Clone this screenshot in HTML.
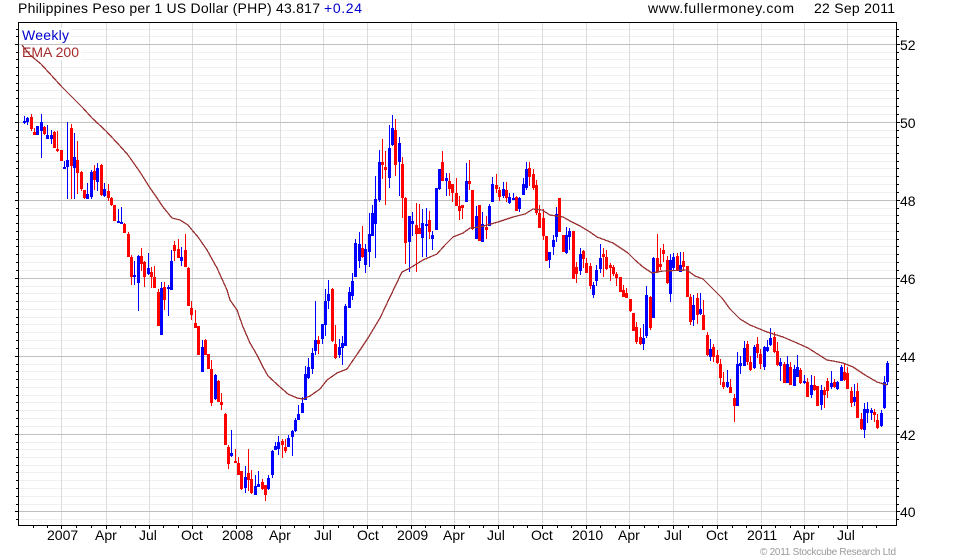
<!DOCTYPE html>
<html><head><meta charset="utf-8"><title>Philippines Peso per 1 US Dollar</title>
<style>html,body{margin:0;padding:0;background:#fff;width:980px;height:560px;overflow:hidden}svg{display:block}text{font-family:"Liberation Sans",Arial,sans-serif;font-size:14px;fill:#000}</style></head>
<body>
<svg xmlns="http://www.w3.org/2000/svg" width="980" height="560" viewBox="0 0 980 560">
<g shape-rendering="crispEdges" fill="none">
<path stroke="#f0f0f0" d="M19 29.5H896M19 36.5H896M19 52.5H896M19 59.5H896M19 67.5H896M19 75.5H896M19 83.5H896M19 90.5H896M19 98.5H896M19 106.5H896M19 114.5H896M19 130.5H896M19 137.5H896M19 145.5H896M19 153.5H896M19 161.5H896M19 168.5H896M19 176.5H896M19 184.5H896M19 192.5H896M19 208.5H896M19 215.5H896M19 223.5H896M19 231.5H896M19 239.5H896M19 246.5H896M19 254.5H896M19 262.5H896M19 270.5H896M19 286.5H896M19 293.5H896M19 301.5H896M19 309.5H896M19 317.5H896M19 324.5H896M19 332.5H896M19 340.5H896M19 348.5H896M19 364.5H896M19 371.5H896M19 379.5H896M19 387.5H896M19 395.5H896M19 402.5H896M19 410.5H896M19 418.5H896M19 426.5H896M19 442.5H896M19 449.5H896M19 457.5H896M19 465.5H896M19 472.5H896M19 480.5H896M19 488.5H896M19 496.5H896M19 504.5H896M19 519.5H896"/>
<path stroke="#dcdcdc" d="M61.5 23V525M106.5 23V525M149.5 23V525M192.5 23V525M236.5 23V525M280.5 23V525M323.5 23V525M367.5 23V525M411.5 23V525M454.5 23V525M498.5 23V525M542.5 23V525M586.5 23V525M629.5 23V525M673.5 23V525M717.5 23V525M761.5 23V525M804.5 23V525M847.5 23V525"/>
<path stroke="#c0c0c0" d="M19 44.5H896M19 122.5H896M19 200.5H896M19 278.5H896M19 356.5H896M19 434.5H896M19 511.5H896"/>
<path stroke="#000" d="M18.5 22V526M18 22.5H897M896.5 22V526M18 525.5H897"/>
<path stroke="#000" d="M16 29.5H18M16 36.5H18M15 44.5H18M16 52.5H18M16 59.5H18M16 67.5H18M16 75.5H18M16 83.5H18M16 90.5H18M16 98.5H18M16 106.5H18M16 114.5H18M15 122.5H18M16 130.5H18M16 137.5H18M16 145.5H18M16 153.5H18M16 161.5H18M16 168.5H18M16 176.5H18M16 184.5H18M16 192.5H18M15 200.5H18M16 208.5H18M16 215.5H18M16 223.5H18M16 231.5H18M16 239.5H18M16 246.5H18M16 254.5H18M16 262.5H18M16 270.5H18M15 278.5H18M16 286.5H18M16 293.5H18M16 301.5H18M16 309.5H18M16 317.5H18M16 324.5H18M16 332.5H18M16 340.5H18M16 348.5H18M15 356.5H18M16 364.5H18M16 371.5H18M16 379.5H18M16 387.5H18M16 395.5H18M16 402.5H18M16 410.5H18M16 418.5H18M16 426.5H18M15 434.5H18M16 442.5H18M16 449.5H18M16 457.5H18M16 465.5H18M16 472.5H18M16 480.5H18M16 488.5H18M16 496.5H18M16 504.5H18M15 511.5H18M16 519.5H18"/>
<path stroke="#000" d="M897 29.5H899M897 36.5H899M897 44.5H900M897 52.5H899M897 59.5H899M897 67.5H899M897 75.5H899M897 83.5H899M897 90.5H899M897 98.5H899M897 106.5H899M897 114.5H899M897 122.5H900M897 130.5H899M897 137.5H899M897 145.5H899M897 153.5H899M897 161.5H899M897 168.5H899M897 176.5H899M897 184.5H899M897 192.5H899M897 200.5H900M897 208.5H899M897 215.5H899M897 223.5H899M897 231.5H899M897 239.5H899M897 246.5H899M897 254.5H899M897 262.5H899M897 270.5H899M897 278.5H900M897 286.5H899M897 293.5H899M897 301.5H899M897 309.5H899M897 317.5H899M897 324.5H899M897 332.5H899M897 340.5H899M897 348.5H899M897 356.5H900M897 364.5H899M897 371.5H899M897 379.5H899M897 387.5H899M897 395.5H899M897 402.5H899M897 410.5H899M897 418.5H899M897 426.5H899M897 434.5H900M897 442.5H899M897 449.5H899M897 457.5H899M897 465.5H899M897 472.5H899M897 480.5H899M897 488.5H899M897 496.5H899M897 504.5H899M897 511.5H900M897 519.5H899"/>
<path stroke="#000" d="M33.5 526V528M47.5 526V528M61.5 526V529M76.5 526V528M91.5 526V528M106.5 526V529M120.5 526V528M135.5 526V528M149.5 526V529M163.5 526V528M178.5 526V528M192.5 526V529M207.5 526V528M222.5 526V528M236.5 526V529M251.5 526V528M265.5 526V528M280.5 526V529M294.5 526V528M309.5 526V528M323.5 526V529M338.5 526V528M353.5 526V528M367.5 526V529M382.5 526V528M396.5 526V528M411.5 526V529M425.5 526V528M440.5 526V528M454.5 526V529M469.5 526V528M483.5 526V528M498.5 526V529M513.5 526V528M527.5 526V528M542.5 526V529M557.5 526V528M571.5 526V528M586.5 526V529M600.5 526V528M615.5 526V528M629.5 526V529M644.5 526V528M658.5 526V528M673.5 526V529M688.5 526V528M702.5 526V528M717.5 526V529M732.5 526V528M746.5 526V528M761.5 526V529M775.5 526V528M790.5 526V528M804.5 526V529M818.5 526V528M833.5 526V528M847.5 526V529M862.5 526V528M876.5 526V528"/>
</g>
<rect x="20" y="28" width="50" height="15" fill="#fff"/>
<rect x="20" y="45" width="61" height="15" fill="#fff"/>
<text x="18" y="13" textLength="302">Philippines Peso per 1 US Dollar (PHP) 43.817</text>
<text x="324" y="13" textLength="38" style="fill:#0000cc">+0.24</text>
<text x="648" y="13" textLength="146">www.fullermoney.com</text>
<text x="814" y="13" textLength="81">22 Sep 2011</text>
<text x="22" y="40" textLength="47" style="fill:#0000cc">Weekly</text>
<text x="22" y="57" textLength="57" style="fill:#a52a2a">EMA 200</text>
<text x="900" y="50">52</text><text x="900" y="128">50</text><text x="900" y="206">48</text><text x="900" y="284">46</text><text x="900" y="362">44</text><text x="900" y="440">42</text><text x="900" y="517">40</text>
<text x="47" y="540">2007</text><text x="95" y="540">Apr</text><text x="139" y="540">Jul</text><text x="181" y="540">Oct</text><text x="222" y="540">2008</text><text x="269" y="540">Apr</text><text x="314" y="540">Jul</text><text x="357" y="540">Oct</text><text x="397" y="540">2009</text><text x="443" y="540">Apr</text><text x="487" y="540">Jul</text><text x="531" y="540">Oct</text><text x="572" y="540">2010</text><text x="618" y="540">Apr</text><text x="664" y="540">Jul</text><text x="706" y="540">Oct</text><text x="747" y="540">2011</text><text x="793" y="540">Apr</text><text x="837" y="540">Jul</text>
<text x="760" y="555" textLength="136" style="font-size:10px;fill:#999">© 2011 Stockcube Research Ltd</text>
<g shape-rendering="crispEdges" fill="none">
<path stroke="#f00" stroke-width="1" d="M31.5 114V131M34.5 128V135M44.5 126V135M54.5 131V148M57.5 131V152M61.5 150V161M71.5 124V199M77.5 141V194M81.5 171V191M84.5 190V199M94.5 165V190M101.5 164V196M108.5 184V201M111.5 197V206M114.5 205V221M124.5 223V233M128.5 232V257M131.5 255V285M141.5 248V271M144.5 261V287M151.5 267V288M154.5 266V288M158.5 289V326M164.5 282V310M174.5 241V261M178.5 239V258M185.5 234V267M188.5 267V306M191.5 301V320M195.5 310V328M198.5 326V355M205.5 339V355M208.5 354V369M211.5 360V406M218.5 380V402M221.5 393V410M225.5 413V445M228.5 445V469M235.5 449V463M238.5 457V475M241.5 471V490M248.5 449V491M251.5 470V494M262.5 479V490M265.5 485V501M282.5 439V458M285.5 439V453M318.5 336V354M332.5 288V342M335.5 325V359M362.5 226V258M382.5 139V179M385.5 151V205M395.5 119V176M402.5 157V218M405.5 197V264M416.5 203V272M419.5 204V234M429.5 211V239M442.5 151V181M449.5 173V196M452.5 184V202M456.5 178V206M459.5 196V220M462.5 205V219M469.5 160V190M472.5 190V230M479.5 205V241M486.5 216V239M496.5 174V193M499.5 187V201M506.5 182V202M516.5 196V211M529.5 162V186M533.5 169V190M536.5 180V215M539.5 205V228M543.5 209V240M546.5 236V261M559.5 198V232M563.5 235V252M573.5 231V279M576.5 262V283M583.5 250V268M586.5 258V273M590.5 263V289M603.5 248V277M606.5 250V270M610.5 263V281M613.5 265V276M616.5 272V286M620.5 277V292M623.5 285V297M626.5 288V298M630.5 299V312M633.5 313V331M636.5 322V344M640.5 328V345M650.5 296V330M657.5 234V273M660.5 248V270M663.5 244V262M667.5 256V284M677.5 253V271M683.5 252V270M687.5 266V297M690.5 294V325M697.5 293V324M703.5 300V330M707.5 332V356M713.5 344V362M717.5 350V364M720.5 359V385M723.5 372V389M730.5 379V393M734.5 394V422M747.5 341V365M750.5 356V371M757.5 337V358M760.5 349V369M774.5 332V353M777.5 342V366M784.5 362V383M790.5 362V385M800.5 368V384M807.5 378V397M814.5 376V391M817.5 386V406M824.5 387V408M827.5 378V398M834.5 379V388M844.5 363V381M847.5 367V389M851.5 387V407M857.5 383V418M861.5 413V430M874.5 409V422M877.5 414V429"/>
<path stroke="#f00" stroke-width="3" d="M31.5 117V129M34.5 132V135M44.5 127V134M54.5 132V148M57.5 149V151M61.5 150V161M71.5 128V166M77.5 160V173M81.5 172V189M84.5 190V198M94.5 171V180M101.5 165V195M108.5 191V198M111.5 198V205M114.5 205V221M124.5 224V233M128.5 234V257M131.5 257V277M141.5 256V264M144.5 262V277M151.5 272V277M154.5 277V288M158.5 292V326M164.5 287V300M174.5 245V251M178.5 249V258M185.5 250V267M188.5 268V306M191.5 308V315M195.5 323V328M198.5 326V355M205.5 340V355M208.5 354V369M211.5 369V403M218.5 381V402M221.5 402V405M225.5 414V445M228.5 447V464M235.5 461V463M238.5 463V475M241.5 471V489M248.5 473V480M251.5 479V493M262.5 482V489M265.5 485V495M282.5 441V445M285.5 447V451M318.5 340V344M332.5 289V341M335.5 344V358M362.5 248V257M382.5 162V165M385.5 167V170M395.5 130V165M402.5 164V198M405.5 198V243M416.5 225V234M419.5 228V234M429.5 220V232M442.5 162V181M449.5 181V189M452.5 184V193M456.5 193V206M459.5 206V211M462.5 205V208M469.5 181V184M472.5 190V229M479.5 205V241M486.5 227V230M496.5 185V189M499.5 190V197M506.5 190V198M516.5 197V211M529.5 168V177M533.5 174V188M536.5 185V213M539.5 213V228M543.5 218V236M546.5 236V261M559.5 198V232M563.5 235V252M573.5 231V279M576.5 267V274M583.5 251V259M586.5 263V273M590.5 266V286M603.5 254V257M606.5 257V269M610.5 265V268M613.5 267V274M616.5 274V278M620.5 277V292M623.5 290V297M626.5 293V298M630.5 299V311M633.5 313V331M636.5 327V342M640.5 337V344M650.5 297V328M657.5 258V272M660.5 264V267M663.5 250V254M667.5 260V283M677.5 256V271M683.5 261V267M687.5 266V297M690.5 297V322M697.5 298V315M703.5 315V330M707.5 335V355M713.5 347V357M717.5 355V363M720.5 364V378M723.5 382V387M730.5 387V393M734.5 398V406M747.5 344V362M750.5 362V370M757.5 344V353M760.5 354V364M774.5 337V352M777.5 351V365M784.5 364V383M790.5 367V385M800.5 370V383M807.5 382V397M814.5 385V390M817.5 386V406M824.5 390V395M827.5 381V391M834.5 382V387M844.5 372V380M847.5 373V389M851.5 391V403M857.5 391V418M861.5 419V429M874.5 412V415M877.5 420V428"/>
<path stroke="#00f" stroke-width="1" d="M24.5 116V124M27.5 117V125M37.5 126V135M41.5 114V158M47.5 125V139M51.5 130V144M64.5 161V169M67.5 122V199M74.5 133V199M87.5 183V199M91.5 170V199M97.5 163V191M104.5 183V197M118.5 209V223M121.5 207V224M134.5 261V285M138.5 255V311M148.5 253V275M161.5 282V335M168.5 285V316M171.5 250V290M181.5 247V266M202.5 340V372M215.5 374V400M231.5 430V457M245.5 466V493M255.5 475V495M258.5 471V487M268.5 475V490M272.5 450V478M275.5 442V450M278.5 436V455M288.5 435V447M292.5 430V456M295.5 418V432M298.5 405V420M302.5 397V413M305.5 366V400M308.5 358V379M312.5 348V374M315.5 301V355M322.5 324V344M325.5 289V336M328.5 280V309M339.5 339V358M342.5 336V365M345.5 304V346M349.5 287V308M352.5 273V300M355.5 239V277M359.5 232V268M365.5 244V273M369.5 213V267M372.5 205V236M375.5 176V258M379.5 150V202M389.5 125V188M392.5 115V146M399.5 137V196M409.5 216V272M412.5 212V236M422.5 209V257M426.5 208V257M432.5 231V250M436.5 188V230M439.5 169V190M446.5 173V196M466.5 163V202M476.5 206V239M482.5 212V242M489.5 204V226M492.5 177V202M503.5 182V198M509.5 193V204M513.5 193V200M519.5 197V212M523.5 178V195M526.5 162V190M549.5 252V268M553.5 235V255M556.5 207V242M566.5 227V254M569.5 228V250M580.5 248V275M593.5 282V298M596.5 265V286M600.5 244V273M643.5 324V350M646.5 286V338M653.5 257V318M670.5 254V302M673.5 253V271M680.5 252V272M693.5 295V326M700.5 293V315M710.5 339V361M727.5 370V388M737.5 352V406M740.5 356V374M744.5 341V366M754.5 345V369M764.5 346V370M767.5 340V352M770.5 328V346M780.5 358V381M787.5 356V383M794.5 365V386M797.5 355V377M804.5 375V384M811.5 375V398M821.5 385V410M831.5 371V389M837.5 381V390M841.5 365V381M854.5 384V406M864.5 403V438M867.5 402V423M871.5 408V420M881.5 410V427M884.5 376V409M887.5 361V385"/>
<path stroke="#00f" stroke-width="3" d="M24.5 121V123M27.5 118V122M37.5 126V135M41.5 122V131M47.5 135V139M51.5 135V139M64.5 167V169M67.5 160V167M74.5 157V168M87.5 194V199M91.5 172V197M97.5 168V182M104.5 189V196M118.5 221V223M121.5 222V224M134.5 275V277M138.5 256V283M148.5 268V274M161.5 288V335M168.5 287V289M171.5 261V290M181.5 257V261M202.5 347V372M215.5 375V399M231.5 453V456M245.5 477V488M255.5 486V495M258.5 484V487M268.5 478V489M272.5 451V475M275.5 446V450M278.5 442V449M288.5 438V447M292.5 431V437M295.5 420V431M298.5 414V420M302.5 403V413M305.5 374V400M308.5 367V378M312.5 353V369M315.5 340V351M322.5 324V339M325.5 301V325M328.5 294V301M339.5 347V355M342.5 343V348M345.5 306V346M349.5 292V308M352.5 281V296M355.5 243V277M359.5 244V261M365.5 249V265M369.5 234V252M372.5 213V236M375.5 199V224M379.5 162V200M389.5 148V178M392.5 128V145M399.5 143V162M409.5 216V242M412.5 221V224M422.5 223V238M426.5 224V226M432.5 235V239M436.5 188V230M439.5 169V189M446.5 178V181M466.5 181V202M476.5 216V239M482.5 224V242M489.5 206V226M492.5 184V202M503.5 189V196M509.5 197V203M513.5 198V200M519.5 198V209M523.5 184V195M526.5 169V188M549.5 252V260M553.5 240V247M556.5 214V237M566.5 235V253M569.5 231V237M580.5 254V271M593.5 285V295M596.5 270V281M600.5 258V269M643.5 338V344M646.5 295V336M653.5 258V318M670.5 260V294M673.5 257V268M680.5 265V272M693.5 305V320M700.5 309V314M710.5 349V357M727.5 382V387M737.5 364V406M740.5 363V366M744.5 348V366M754.5 347V368M764.5 347V367M767.5 347V351M770.5 338V345M780.5 362V366M787.5 364V383M794.5 369V386M797.5 367V377M804.5 381V383M811.5 385V395M821.5 390V405M831.5 383V387M837.5 382V389M841.5 367V381M854.5 397V402M864.5 409V430M867.5 409V413M871.5 410V413M881.5 413V426M884.5 382V408M887.5 363V382"/>
<polyline stroke="#993333" stroke-width="1.3" points="22,45 30,55 41,64 62,87 83,108 92,118 106,131 120,146 128,155 140,172 150,188 155,195 163,207 172,218 180,220 188,225 192,230 198,237 207,250 217,268 227,290 230,300 237,310 243,327 250,343 257,355 263,367 268,376 280,387 288,394 297,398 303,399 310,396 320,389 327,380 337,373 347,369 358,353 368,338 380,318 390,297 402,272 410,268 423,260 437,254 445,245 453,237 463,233 470,228 480,227 498,222 513,217 525,214 533,209 542,210 550,215 563,217 570,221 580,226 590,232 597,237 613,243 628,253 635,260 643,267 652,273 663,271 687,270 695,276 703,279 722,298 730,309 740,319 750,325 767,332 783,337 797,343 808,348 827,360 833,361 843,363 853,367 865,375 877,382 887,385"/>
</g>
</svg>
</body></html>
